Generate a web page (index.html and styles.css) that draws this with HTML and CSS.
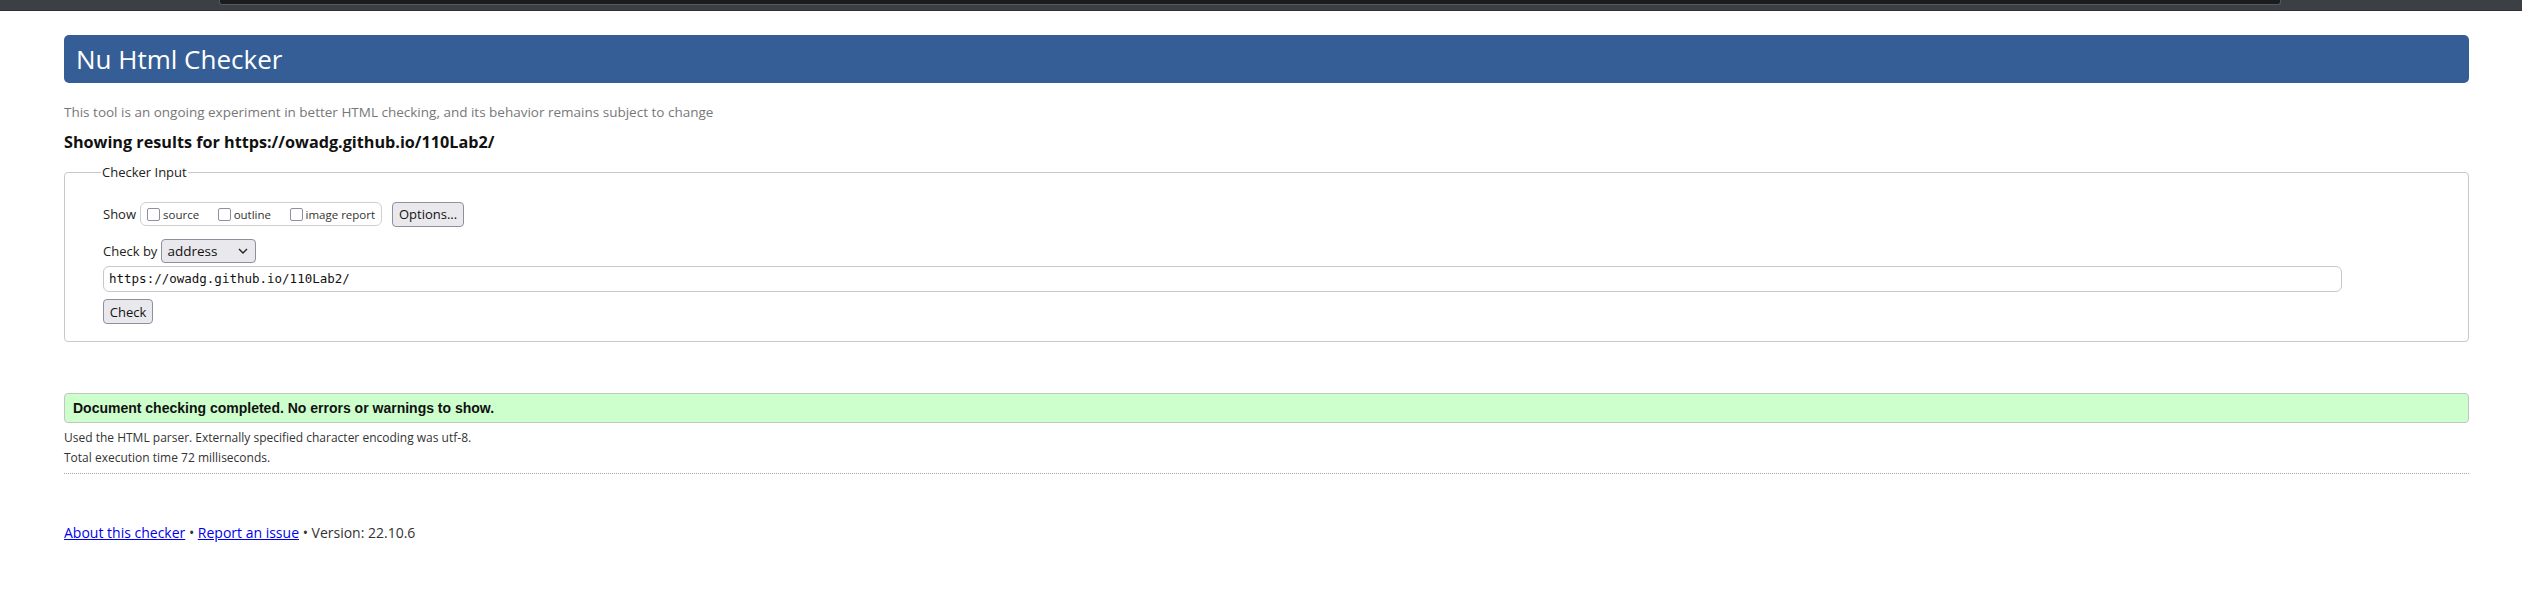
FILE: index.html
```html
<!DOCTYPE html>
<html lang="en">
<head>
<meta charset="utf-8">
<title>Showing results for https://owadg.github.io/110Lab2/ - Nu Html Checker</title>
<link rel="stylesheet" href="styles.css">
</head>
<body>
<div class="chrome"><div class="chrome-tab"></div></div>
<div class="page">
  <h1 class="title">Nu Html Checker</h1>
  <p class="subtitle">This tool is an ongoing experiment in better HTML checking, and its behavior remains subject to change</p>
  <h2 class="results-for">Showing results for https://owadg.github.io/110Lab2/</h2>
  <form class="checker-form">
    <fieldset class="checker-input">
      <legend class="legend">Checker Input</legend>
      <div class="row show-row">
        <span class="label">Show</span>
        <div class="show-box">
          <label class="opt"><span class="cb"></span>source</label>
          <label class="opt"><span class="cb"></span>outline</label>
          <label class="opt"><span class="cb"></span>image report</label>
        </div>
        <button type="button" class="btn options-btn">Options...</button>
      </div>
      <div class="row checkby-row">
        <span class="label">Check by</span>
        <div class="select">
          <span class="select-text">address</span>
          <svg class="chev" width="10" height="6" viewBox="0 0 10 6"><path d="M1 1 L5 5 L9 1" fill="none" stroke="#222" stroke-width="1.4"/></svg>
        </div>
      </div>
      <div class="url-input">https://owadg.github.io/110Lab2/</div>
      <button type="button" class="btn check-btn">Check</button>
    </fieldset>
  </form>
  <div class="success">Document checking completed. No errors or warnings to show.</div>
  <p class="details">Used the HTML parser. Externally specified character encoding was utf-8.</p>
  <p class="details">Total execution time 72 milliseconds.</p>
  <hr class="sep">
  <p class="footer"><a href="#">About this checker</a> • <a href="#">Report an issue</a> • Version: 22.10.6</p>
</div>
</body>
</html>
```
FILE: styles.css
```css
html, body {
  margin: 0;
  padding: 0;
  background: #fff;
}
body {
  font-family: "Open Sans", "Noto Sans", sans-serif;
  color: #222;
}
.chrome {
  height: 10px;
  background: #3c3f44;
  border-bottom: 1px solid #2c2e32;
}
.chrome-tab {
  margin-left: 219px;
  width: 2060px;
  height: 4px;
  background: #1b1c20;
  border-radius: 0 0 3px 3px;
  border: 1px solid #55585d;
  border-top: none;
}
.page {
  padding: 0 53px 0 64px;
}
.title {
  margin: 24px 0 0;
  height: 48px;
  line-height: 48px;
  background: #365e96;
  border-radius: 5px;
  color: #fff;
  font-size: 26px;
  font-weight: 400;
  padding-left: 12px;
}
.subtitle {
  margin: 19px 0 0;
  font-size: 13.5px;
  line-height: 20px;
  color: #777;
}
.results-for {
  margin: 8px 0 0;
  font-size: 16.2px;
  line-height: 24px;
  font-weight: 700;
  color: #111;
}
.checker-form {
  margin: 9px 0 0;
}
.checker-input {
  margin: 0;
  padding: 0 38px 17px 38px;
  border: 1px solid #c8c8c8;
  border-radius: 4px;
  min-width: 0;
}
.legend {
  padding: 0 1px;
  margin-left: -2px;
  font-size: 13px;
  line-height: 18px;
  color: #222;
}
.row {
  display: flex;
  align-items: center;
}
.show-row {
  margin-top: 21px;
  height: 24px;
}
.label {
  font-size: 13px;
  margin-right: 4px;
}
.show-box {
  display: flex;
  align-items: center;
  height: 22px;
  border: 1px solid #cfcfcf;
  border-radius: 6px;
  padding: 0 6px 0 6px;
  gap: 18.5px;
  margin-right: 10px;
}
.opt {
  display: flex;
  align-items: center;
  font-size: 11.5px;
  color: #333;
}
.cb {
  width: 11px;
  height: 11px;
  border: 1px solid #8f8f9d;
  border-radius: 2px;
  margin-right: 3px;
  background: #fff;
}
.btn {
  font-family: "Open Sans", "Noto Sans", sans-serif;
  font-size: 13px;
  color: #111;
  background: #e9e9ed;
  border: 1px solid #8f8f9d;
  border-radius: 4px;
  padding: 0 5px;
  height: 25px;
  line-height: 22px;
}
.options-btn {
  width: 72px;
}
.checkby-row {
  margin-top: 13px;
  height: 24px;
}
.select {
  display: flex;
  align-items: center;
  justify-content: space-between;
  width: 95px;
  height: 24px;
  box-sizing: border-box;
  background: #e9e9ed;
  border: 1px solid #8f8f9d;
  border-radius: 4px;
  padding: 0 7px 0 5px;
  font-size: 13.5px;
  color: #111;
}
.url-input {
  margin-top: 3px;
  width: 2239px;
  height: 26px;
  box-sizing: border-box;
  border: 1px solid #c8c8c8;
  border-radius: 6px;
  padding: 0 5px;
  font-family: "DejaVu Sans Mono", monospace;
  font-size: 12.5px;
  line-height: 24px;
  color: #111;
}
.check-btn {
  margin-top: 7px;
  width: 50px;
  display: block;
}
.success {
  margin-top: 51px;
  height: 30px;
  box-sizing: border-box;
  background: #ccffcc;
  border: 1px solid #c4c4c4;
  border-radius: 4px;
  padding: 0 8px;
  font-family: "Liberation Sans", Arial, sans-serif;
  font-weight: 700;
  font-size: 14px;
  line-height: 28px;
  color: #111;
}
.details {
  margin: 0;
  font-size: 12px;
  line-height: 20px;
  color: #333;
}
.success + .details {
  margin-top: 5px;
}
.sep {
  margin: 5px 0 0;
  border: none;
  border-top: 1px dotted #aaa;
  height: 0;
}
.footer {
  margin: 49px 0 0;
  font-size: 14px;
  line-height: 20px;
  color: #333;
}
.footer a {
  color: #0000ee;
}
```
